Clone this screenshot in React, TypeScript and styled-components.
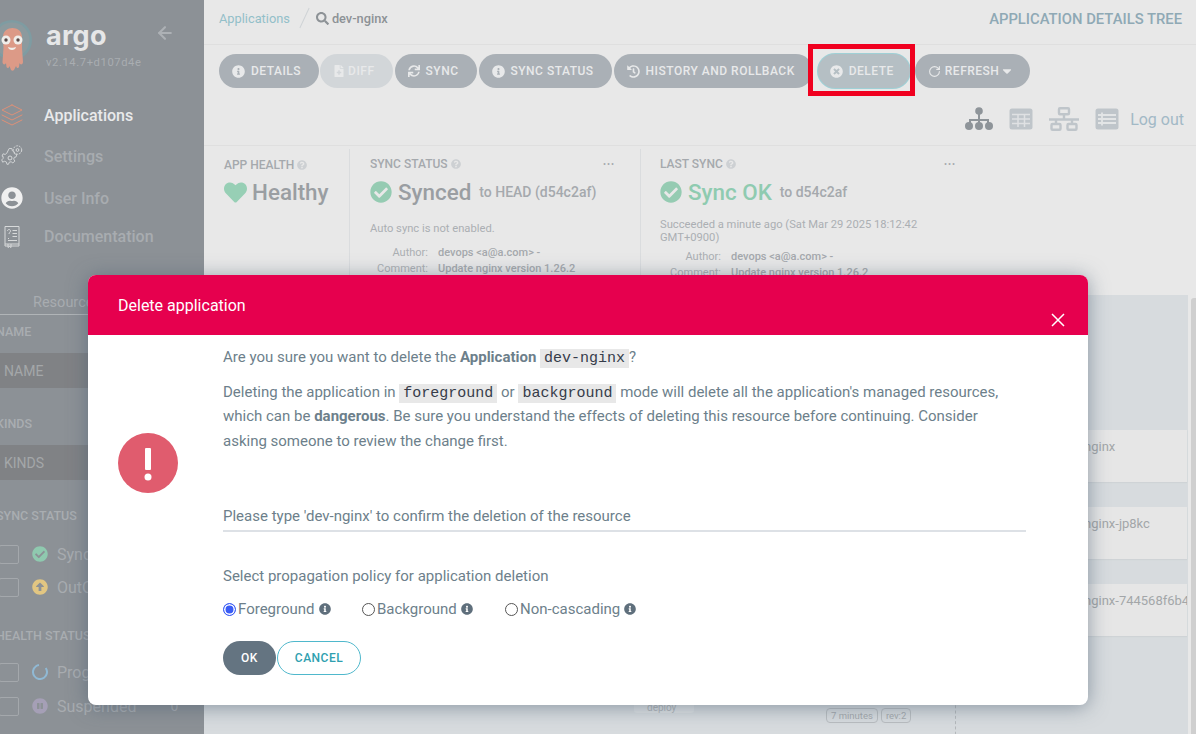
import React from 'react';
import styled, { createGlobalStyle } from 'styled-components';
import {
  FaArrowAltCircleUp,
  FaCaretDown,
  FaCheckCircle,
  FaFileMedical,
  FaHeart,
  FaHistory,
  FaInfoCircle,
  FaPauseCircle,
  FaQuestionCircle,
  FaSearch,
  FaSync,
  FaTimesCircle,
  FaUserCircle,
} from 'react-icons/fa';
import { FiArrowLeft, FiLayers } from 'react-icons/fi';
import { RotateCw } from 'lucide-react';

const GlobalStyle = createGlobalStyle`
  html, body {
    margin: 0;
    height: 100%;
    overflow: hidden;
    font-family: Roboto, "Liberation Sans", sans-serif;
  }
  * {
    box-sizing: border-box;
  }
`;

const Logo = () => (
  <LogoImage viewBox="0 0 40 52">
    <circle cx="20" cy="20" r="20" fill="#7e9ca2" />
    <circle cx="20" cy="20" r="17.500" fill="#8c9a9e" />
    <path d="M11 17c0-12 19-12 19 0v11l1 14c0 3-3 3-3.500 1l-.5 4c-1 2-2.500 1-3-1l-2 4c-1 1-2 1-3 0l-1.500-4c-.5 2-2 3-3 1l-.5-4c-.5 2-3.500 2-3.500-1l1-14z" fill="#dc9a87" />
    <circle cx="14" cy="20" r="4.500" fill="#f0eeea" />
    <circle cx="26" cy="20" r="4.500" fill="#f0eeea" />
    <circle cx="14" cy="20" r="1.700" fill="#5a4a48" />
    <circle cx="26" cy="20" r="1.700" fill="#5a4a48" />
    <path d="M16 27c2 1 6 1 8 0-.5 4-7.500 4-8 0z" fill="#f0eeea" />
  </LogoImage>
);

const SettingsIcon = () => (
  <NavSvg viewBox="0 0 24 24" fill="none" stroke="#d7d9da" strokeWidth="1">
    <circle cx="10" cy="14" r="2" />
    <circle cx="17.500" cy="6" r="1.400" />
    <path d="M8 5h3l.5 2.500 2 1 .2 2.200 2.800 1-1 2.800-1.800.3-.7 2 1.300 2.200-2.200 2-2-1.300-2 .5-.9 2.300H5.500l-.6-2.400-2-.9-2.200 1-1-2.500 1.600-1.800v-2L0 13.500l1.200-2.600 2.300.7 1.700-1.200z" transform="translate(2 0) scale(.9)" />
    <circle cx="17.500" cy="6" r="4.200" strokeDasharray="2 1" />
  </NavSvg>
);

const DocsIcon = () => (
  <NavSvg viewBox="0 0 24 24" fill="none" stroke="#d7d9da" strokeWidth="1">
    <path d="M5 20V2.500h14V20z" />
    <path d="M5 20v2h14v-2M8 20v3.500l1.500-1 1.500 1V20" />
    <path d="M12.500 6.500H17M12.500 9.500H17M12.500 12.500H17M8 14.500h1M8 16.500h9" />
    <path d="M7.500 7c0-2 3-2 3 0 0 1.300-1.500 1.300-1.500 3" />
  </NavSvg>
);

const ProgressRing = () => (
  <svg viewBox="0 0 16 16" width="16" height="16" fill="none">
    <circle cx="8" cy="8" r="7" stroke="#90b9d4" strokeWidth="2" strokeDasharray="36 8" transform="rotate(-35 8 8)" />
  </svg>
);

const TreeViewIcon = () => (
  <ViewSvg viewBox="0 0 28 24" fill="#8e9499" width="28" height="24">
    <circle cx="14" cy="4" r="3.800" />
    <path d="M13 7h2v5h9v4h-2v-2h-7v2h-2v-2H6v2H4v-4h9z" />
    <circle cx="4" cy="19" r="4" />
    <circle cx="14" cy="19" r="4" />
    <circle cx="24" cy="19" r="4" />
  </ViewSvg>
);

const GridViewIcon = () => (
  <ViewSvg viewBox="0 0 24 22" width="24" height="22">
    <rect x="0.500" y="0.500" width="23" height="21" rx="2.500" fill="#bfc5ca" />
    <path d="M9 6v13M15.500 6v13M3 6.500h18M3 11h18M3 15.500h18" stroke="#dfe1e3" strokeWidth="1.500" />
  </ViewSvg>
);

const NetworkViewIcon = () => (
  <ViewSvg viewBox="0 0 30 24" width="30" height="24" fill="none" stroke="#bfc5ca" strokeWidth="2.400">
    <rect x="10" y="1.200" width="10" height="6" rx="1" />
    <path d="M15 7v5M0 12.500h30M7 13v4M23 13v4" />
    <rect x="2.500" y="17" width="9" height="5.800" rx="1" />
    <rect x="18.500" y="17" width="9" height="5.800" rx="1" />
  </ViewSvg>
);

const ListViewIcon = () => (
  <ViewSvg viewBox="0 0 24 22" width="24" height="22">
    <rect x="0.500" y="0.500" width="23" height="21" rx="2.500" fill="#bfc5ca" />
    <path d="M7 4.500v13M3 7h18M3 11h18M3 15h18" stroke="#e3e5e6" strokeWidth="1.800" />
  </ViewSvg>
);

const App = (): JSX.Element => {
  return (
    <Page>
      <GlobalStyle />
      <Sidebar>
        <Brand>
          <Logo />
          <BrandText>
            <BrandName>argo</BrandName>
            <Version>v2.14.7+d107d4e</Version>
          </BrandText>
          <CollapseArrow>
            <FiArrowLeft size={20} strokeWidth={2.5} />
          </CollapseArrow>
        </Brand>
        <Nav>
          <NavItem $active $height={40}>
            <NavIcon><FiLayers size={24} color="#dd9078" strokeWidth={1} /></NavIcon>
            Applications
          </NavItem>
          <NavItem $height={42}>
            <NavIcon><SettingsIcon /></NavIcon>
            Settings
          </NavItem>
          <NavItem $height={42}>
            <NavIcon><FaUserCircle size={22} color="#f0f0f0" /></NavIcon>
            User Info
          </NavItem>
          <NavItem $height={34}>
            <NavIcon><DocsIcon /></NavIcon>
            Documentation
          </NavItem>
        </Nav>
        <FilterTab>Resources</FilterTab>
        <FilterLabel $top={10}>NAME</FilterLabel>
        <FilterInput>NAME</FilterInput>
        <FilterLabel $top={29}>KINDS</FilterLabel>
        <FilterInput>KINDS</FilterInput>
        <FilterLabel $top={29}>SYNC STATUS</FilterLabel>
        <FilterRow $top={22}>
          <Check />
          <FaCheckCircle size={16} color="#8fc9af" />
          <FilterText>Synced</FilterText>
        </FilterRow>
        <FilterRow $top={15}>
          <Check />
          <FaArrowAltCircleUp size={16} color="#e2c682" />
          <FilterText>OutOfSync</FilterText>
        </FilterRow>
        <FilterLabel $top={33}>HEALTH STATUS</FilterLabel>
        <FilterRow $top={20}>
          <Check />
          <ProgressRing />
          <FilterText>Progressing</FilterText>
        </FilterRow>
        <FilterRow $top={16}>
          <Check />
          <FaPauseCircle size={16} color="#a59fb6" />
          <FilterText>Suspended</FilterText>
          <FilterCount>0</FilterCount>
        </FilterRow>
      </Sidebar>

      <Main>
        <TopBar>
          <Crumbs>
            <CrumbLink>Applications</CrumbLink>
            <CrumbSlash />
            <FaSearch size={13} color="#8d9296" />
            <CrumbCurrent>dev-nginx</CrumbCurrent>
          </Crumbs>
          <PageTitle>APPLICATION DETAILS TREE</PageTitle>
        </TopBar>

        <Toolbar>
          <ActionRow>
            <ActionButton>
              <FaInfoCircle size={13} />
              DETAILS
            </ActionButton>
            <ActionButton $disabled>
              <DiffIcon size={12} />
              DIFF
            </ActionButton>
            <ActionButton>
              <FaSync size={12} />
              SYNC
            </ActionButton>
            <ActionButton>
              <FaInfoCircle size={13} />
              SYNC STATUS
            </ActionButton>
            <ActionButton>
              <FaHistory size={13} />
              HISTORY AND ROLLBACK
            </ActionButton>
            <DeleteWrap>
              <DeleteButton>
                <FaTimesCircle size={13} />
                DELETE
              </DeleteButton>
              <DeleteFrame />
            </DeleteWrap>
            <ActionButton>
              <RefreshIcon size={13} strokeWidth={2} />
              REFRESH
              <CaretIcon size={14} />
            </ActionButton>
          </ActionRow>
          <ViewRow>
            <TreeViewIcon />
            <GridViewIcon />
            <NetworkViewIcon />
            <ListViewIcon />
            <LogOut>Log out</LogOut>
          </ViewRow>
        </Toolbar>

        <StatusBar>
          <HealthPanel>
            <PanelTitle>
              APP HEALTH
              <HelpIcon />
            </PanelTitle>
            <StatusLine $top={6}>
              <HeartIcon size={23} />
              <StatusWord>Healthy</StatusWord>
            </StatusLine>
          </HealthPanel>

          <SyncPanel>
            <PanelHead>
              <PanelTitle>
                SYNC STATUS
                <HelpIcon />
              </PanelTitle>
              <Dots>•••</Dots>
            </PanelHead>
            <StatusLine $top={7}>
              <FaCheckCircle size={22} color="#95cbb2" />
              <StatusWord>Synced</StatusWord>
              <StatusSuffix>to HEAD (d54c2af)</StatusSuffix>
            </StatusLine>
            <StatusNote $top={16}>Auto sync is not enabled.</StatusNote>
            <MetaRow $top={11}>
              <MetaKey $width={58}>Author:</MetaKey>
              <MetaValue>devops &lt;a@a.com&gt; -</MetaValue>
            </MetaRow>
            <MetaRow $top={3}>
              <MetaKey $width={58}>Comment:</MetaKey>
              <MetaValue>Update nginx version 1.26.2</MetaValue>
            </MetaRow>
          </SyncPanel>

          <LastSyncPanel>
            <PanelHead>
              <PanelTitle>
                LAST SYNC
                <HelpIcon />
              </PanelTitle>
              <Dots>•••</Dots>
            </PanelHead>
            <StatusLine $top={7}>
              <FaCheckCircle size={22} color="#95cbb2" />
              <StatusWord $ok>Sync OK</StatusWord>
              <StatusSuffix>to d54c2af</StatusSuffix>
            </StatusLine>
            <StatusNote $top={12}>
              Succeeded a minute ago (Sat Mar 29 2025 18:12:42 GMT+0900)
            </StatusNote>
            <MetaRow $top={6}>
              <MetaKey $width={61}>Author:</MetaKey>
              <MetaValue>devops &lt;a@a.com&gt; -</MetaValue>
            </MetaRow>
            <MetaRow $top={3}>
              <MetaKey $width={61}>Comment:</MetaKey>
              <MetaValue>Update nginx version 1.26.2</MetaValue>
            </MetaRow>
          </LastSyncPanel>
        </StatusBar>

        <TreeArea>
          <TreeCanvas>
            <DeployNode>
              <NodeTag>deploy</NodeTag>
            </DeployNode>
            <NodePills>
              <NodePill>7 minutes</NodePill>
              <NodePill>rev:2</NodePill>
            </NodePills>
            <DashedEdge />
            <TreeColumn>
              <TreeCard>dev-nginx</TreeCard>
              <TreeCard>dev-nginx-jp8kc</TreeCard>
              <TreeCard>dev-nginx-744568f6b4</TreeCard>
            </TreeColumn>
          </TreeCanvas>
          <Scrollbar />
        </TreeArea>
      </Main>

      <Modal>
        <ModalHeader>
          <ModalTitle>Delete application</ModalTitle>
          <CloseIcon viewBox="0 0 14 14">
            <path d="M1 1l12 12M13 1L1 13" stroke="#fff" strokeWidth="1.500" fill="none" />
          </CloseIcon>
        </ModalHeader>
        <ModalBody>
          <WarnColumn>
            <svg viewBox="0 0 60 60" width="60" height="60">
              <circle cx="30" cy="30" r="30" fill="#e05c6e" />
              <rect x="27" y="15" width="6" height="22" rx="1" fill="#fff" />
              <circle cx="30" cy="44" r="3.500" fill="#fff" />
            </svg>
          </WarnColumn>
          <ModalContent>
            <Paragraph>
              Are you sure you want to delete the <b>Application</b> <Code>dev-nginx</Code>?
            </Paragraph>
            <Paragraph $top={10}>
              Deleting the application in <Code>foreground</Code> or <Code>background</Code> mode
              will delete all the application&apos;s managed resources, which can be{' '}
              <b>dangerous</b>. Be sure you understand the effects of deleting this resource
              before continuing. Consider asking someone to review the change first.
            </Paragraph>
            <ConfirmField>Please type &apos;dev-nginx&apos; to confirm the deletion of the resource</ConfirmField>
            <PolicyLabel>Select propagation policy for application deletion</PolicyLabel>
            <PolicyRow>
              <PolicyOption $width={139}>
                <Radio $checked />
                Foreground
                <FaInfoCircle size={12} color="#5f6f7c" />
              </PolicyOption>
              <PolicyOption $width={143}>
                <Radio />
                Background
                <FaInfoCircle size={12} color="#5f6f7c" />
              </PolicyOption>
              <PolicyOption $width={140}>
                <Radio />
                Non-cascading
                <FaInfoCircle size={12} color="#5f6f7c" />
              </PolicyOption>
            </PolicyRow>
            <ButtonRow>
              <OkButton>OK</OkButton>
              <CancelButton>CANCEL</CancelButton>
            </ButtonRow>
          </ModalContent>
        </ModalBody>
      </Modal>
    </Page>
  );
};

export default App;

const Page = styled.div`
  display: flex;
  height: 100vh;
  overflow: hidden;
  position: relative;
  background: #e8e8e8;
`;

const Sidebar = styled.aside`
  background: #8c9196;
  display: flex;
  flex-direction: column;
  flex-shrink: 0;
  overflow: hidden;
  width: 204px;
`;

const Brand = styled.div`
  align-items: flex-start;
  display: flex;
  height: 90px;
  padding-top: 20px;
`;

const LogoImage = styled.svg`
  flex-shrink: 0;
  height: 52px;
  margin-left: -8px;
  width: 40px;
`;

const BrandText = styled.div`
  margin-left: 14px;
  width: 109px;
`;

const BrandName = styled.div`
  color: #e6e7e8;
  font-family: Inter, sans-serif;
  font-size: 27px;
  font-weight: 700;
  letter-spacing: 0.3px;
  line-height: 32px;
`;

const Version = styled.div`
  color: #a9adb1;
  font-size: 11.2px;
  letter-spacing: 0.6px;
  line-height: 14px;
  margin-top: 4px;
`;

const CollapseArrow = styled.div`
  color: #adb1b5;
  display: flex;
  margin-top: 3px;
`;

const Nav = styled.nav`
  display: flex;
  flex-direction: column;
  margin-top: 5px;
`;

const NavItem = styled.div<{ $active?: boolean; $height: number }>`
  align-items: center;
  color: ${(p) => (p.$active ? '#e9eaeb' : '#a8acb0')};
  display: flex;
  font-size: 16px;
  font-weight: 500;
  height: ${(p) => p.$height}px;
`;

const NavIcon = styled.span`
  display: flex;
  justify-content: center;
  margin-right: 20px;
  width: 24px;
`;

const NavSvg = styled.svg`
  height: 24px;
  width: 24px;
`;

const FilterTab = styled.div`
  border-bottom: 1px solid #b0b4b7;
  color: #a8acb0;
  flex-shrink: 0;
  font-size: 14.5px;
  height: 21px;
  margin-top: 41px;
  padding-left: 33px;
  width: 100px;
`;

const FilterLabel = styled.div<{ $top: number }>`
  color: #a9adb1;
  flex-shrink: 0;
  font-size: 12.5px;
  font-weight: 500;
  line-height: 14px;
  margin-left: -4px;
  margin-top: ${(p) => p.$top}px;
  white-space: nowrap;
`;

const FilterInput = styled.div`
  align-items: center;
  background: #808285;
  color: #a4a7a9;
  display: flex;
  flex-shrink: 0;
  font-size: 14px;
  height: 35px;
  margin-top: 14px;
  padding-left: 4px;
`;

const FilterRow = styled.div<{ $top: number }>`
  align-items: center;
  display: flex;
  flex-shrink: 0;
  height: 18px;
  margin-top: ${(p) => p.$top}px;
`;

const Check = styled.span`
  border: 1px solid #a4a8ac;
  border-radius: 2px;
  height: 19px;
  margin-left: -1px;
  margin-right: 13px;
  width: 20px;
`;

const FilterText = styled.span`
  color: #a8acb0;
  font-size: 16px;
  margin-left: 9px;
`;

const FilterCount = styled.span`
  color: #a8acb0;
  font-size: 14px;
  margin-left: 34px;
`;

const Main = styled.main`
  display: flex;
  flex: 1;
  flex-direction: column;
  min-width: 0;
`;

const TopBar = styled.header`
  align-items: center;
  border-bottom: 1px solid #dfdfdf;
  display: flex;
  flex-shrink: 0;
  height: 45px;
  justify-content: space-between;
  padding: 0 14px 8px 15px;
`;

const Crumbs = styled.div`
  align-items: center;
  display: flex;
`;

const CrumbLink = styled.span`
  color: #93bfc9;
  font-size: 12.8px;
`;

const CrumbSlash = styled.span`
  background: #cfd3d6;
  height: 22px;
  margin: 0 11px 0 14px;
  transform: rotate(25deg);
  width: 1px;
`;

const CrumbCurrent = styled.span`
  color: #8d9296;
  font-size: 12.8px;
  font-weight: 500;
  margin-left: 3px;
`;

const PageTitle = styled.div`
  color: #8fa9b5;
  font-size: 14.8px;
  font-weight: 500;
  margin-top: 2px;
`;

const Toolbar = styled.div`
  border-bottom: 1px solid #dfdfdf;
  flex-shrink: 0;
  height: 101px;
  padding: 9px 15px 0;
`;

const ActionRow = styled.div`
  align-items: center;
  display: flex;
  gap: 2px;

  & > :first-child {
    margin-right: -1px;
  }
`;

const ActionButton = styled.div<{ $disabled?: boolean }>`
  align-items: center;
  background: ${(p) => (p.$disabled ? '#d2d6d9' : '#aab0b6')};
  border-radius: 17px;
  color: #e8e9ea;
  display: flex;
  font-size: 12px;
  font-weight: 500;
  gap: 6px;
  height: 34px;
  letter-spacing: 0.5px;
  padding: 0 18px 0 13px;
  white-space: nowrap;
`;

const DiffIcon = styled(FaFileMedical)`
  margin-right: -3px;
`;

const DeleteWrap = styled.div`
  margin: 0 3px 0 3px;
  position: relative;
`;

const DeleteFrame = styled.div`
  border: 5px solid #f0001f;
  bottom: -8px;
  left: -10px;
  position: absolute;
  right: -5px;
  top: -10px;
  z-index: 1;
`;

const DeleteButton = styled(ActionButton)`
  background: #b5bfc4;
  box-shadow: 0 0 0 1px #9fd0d6;
  padding: 0 16px 0 12px;
`;

const RefreshIcon = styled(RotateCw)`
  margin-right: -2px;
`;

const CaretIcon = styled(FaCaretDown)`
  margin: 0 -2px 0 -5px;
`;

const ViewRow = styled.div`
  align-items: center;
  display: flex;
  gap: 16px;
  justify-content: flex-end;
  margin: 19px -3px 0 0;
`;

const ViewSvg = styled.svg`
  display: block;
  flex-shrink: 0;
`;

const LogOut = styled.span`
  color: #a2b9c6;
  font-size: 16px;
  margin-left: -5px;
`;

const StatusBar = styled.section`
  display: flex;
  flex-shrink: 0;
  height: 149px;
  overflow: hidden;
  padding-top: 3px;
`;

const HealthPanel = styled.div`
  border-right: 1px solid #dadcde;
  padding: 9px 0 0 20px;
  width: 146px;
`;

const SyncPanel = styled.div`
  border-right: 1px solid #dadcde;
  padding: 8px 25px 0 20px;
  width: 291px;
`;

const LastSyncPanel = styled.div`
  padding: 8px 0 0 19px;
  width: 315px;
`;

const PanelHead = styled.div`
  align-items: center;
  display: flex;
  justify-content: space-between;
`;

const PanelTitle = styled.div`
  align-items: center;
  color: #a5a9ad;
  display: flex;
  font-size: 12px;
  font-weight: 500;
  gap: 3px;
`;

const HelpIcon = styled(FaQuestionCircle)`
  color: #cdd0d3;
  height: 10px;
  width: 10px;
`;

const Dots = styled.span`
  color: #a5a9ad;
  font-size: 9px;
  letter-spacing: 1px;
  line-height: 12px;
`;

const StatusLine = styled.div<{ $top: number }>`
  align-items: center;
  display: flex;
  gap: 6px;
  height: 28px;
  margin-top: ${(p) => p.$top}px;
`;

const HeartIcon = styled(FaHeart)`
  color: #97cfb5;
  margin-right: -1px;
`;

const StatusWord = styled.span<{ $ok?: boolean }>`
  color: ${(p) => (p.$ok ? '#8fcbb0' : '#9a9ea2')};
  font-size: 22.4px;
  font-weight: 500;
`;

const StatusSuffix = styled.span`
  color: #a5a9ad;
  font-size: 14px;
  font-weight: 500;
  margin-left: 2px;
`;

const StatusNote = styled.div<{ $top: number }>`
  color: #abafb3;
  font-size: 11.2px;
  line-height: 13px;
  margin-top: ${(p) => p.$top}px;
`;

const MetaRow = styled.div<{ $top: number }>`
  display: flex;
  font-size: 11px;
  gap: 10px;
  line-height: 13px;
  margin-top: ${(p) => p.$top}px;
  white-space: nowrap;
`;

const MetaKey = styled.span<{ $width: number }>`
  color: #abafb3;
  text-align: right;
  width: ${(p) => p.$width}px;
`;

const MetaValue = styled.span`
  color: #a5a9ad;
  font-weight: 500;
`;

const TreeArea = styled.section`
  display: flex;
  flex: 1;
  gap: 3px;
  min-height: 0;
`;

const TreeCanvas = styled.div`
  background: #d7dbde;
  flex: 1;
  overflow: hidden;
  position: relative;
`;

const TreeColumn = styled.div`
  display: flex;
  flex-direction: column;
  gap: 25px;
  margin-left: 756px;
  padding: 135px 1px 0 0;
`;

const TreeCard = styled.div`
  background: #e6e6e6;
  box-shadow: 0 1px 1px #cfd3d6;
  color: #a3a6a9;
  font-size: 13px;
  height: 52px;
  overflow: hidden;
  padding: 9px 0 0 100px;
  white-space: nowrap;
`;

const DeployNode = styled.div`
  background: #dfe2e4;
  border-radius: 3px;
  height: 11px;
  left: 430px;
  position: absolute;
  top: 407px;
  width: 60px;
`;

const NodeTag = styled.span`
  color: #b2b6b9;
  display: block;
  font-size: 10px;
  line-height: 11px;
  padding-left: 13px;
`;

const NodePills = styled.div`
  display: flex;
  gap: 3px;
  left: 622px;
  position: absolute;
  top: 413px;
`;

const NodePill = styled.span`
  border: 1px solid #b9bdc0;
  border-radius: 4px;
  color: #a5a9ad;
  font-size: 9.5px;
  line-height: 13px;
  padding: 0 4px;
`;

const DashedEdge = styled.div`
  border-left: 1px dashed #b4b8bb;
  height: 40px;
  left: 751px;
  position: absolute;
  top: 405px;
`;

const Scrollbar = styled.div`
  background: #cfcfcf;
  border-radius: 3px 0 0 0;
  flex-shrink: 0;
  margin-top: 3px;
  width: 5px;
`;

const Modal = styled.div`
  background: #fff;
  border-radius: 8px;
  box-shadow: 0 2px 20px rgba(70, 90, 110, 0.55);
  display: flex;
  flex-direction: column;
  height: 430px;
  left: 88px;
  overflow: hidden;
  position: absolute;
  top: 275px;
  width: 1000px;
  z-index: 2;
`;

const ModalHeader = styled.div`
  align-items: center;
  background: #e6004e;
  display: flex;
  flex-shrink: 0;
  height: 60px;
  justify-content: space-between;
  padding: 0 23px 0 30px;
`;

const ModalTitle = styled.div`
  color: #fff;
  font-size: 16px;
`;

const CloseIcon = styled.svg`
  align-self: flex-end;
  height: 14px;
  margin-bottom: 8px;
  width: 14px;
`;

const ModalBody = styled.div`
  display: flex;
  flex: 1;
`;

const WarnColumn = styled.div`
  flex-shrink: 0;
  padding: 98px 0 0 30px;
  width: 135px;
`;

const ModalContent = styled.div`
  color: #6d7f8b;
  display: flex;
  flex-direction: column;
  font-size: 15px;
  padding-top: 10px;
  width: 803px;
`;

const Paragraph = styled.p<{ $top?: number }>`
  line-height: 24.5px;
  margin: ${(p) => p.$top ?? 0}px 0 0;
  width: 790px;

  b {
    font-weight: 700;
  }
`;

const Code = styled.code`
  background: #e8e8e8;
  color: #363c4a;
  font-family: "Liberation Mono", monospace;
  font-size: 15px;
  line-height: 1;
  padding: 1px 4px;
`;

const ConfirmField = styled.div`
  border-bottom: 2px solid #dde1e6;
  flex-shrink: 0;
  height: 28px;
  line-height: 24px;
  margin-top: 51px;
`;

const PolicyLabel = styled.div`
  line-height: 20px;
  margin-top: 34px;
`;

const PolicyRow = styled.div`
  align-items: center;
  display: flex;
  height: 20px;
  margin-top: 13px;
`;

const PolicyOption = styled.div<{ $width: number }>`
  align-items: center;
  display: flex;
  width: ${(p) => p.$width}px;

  svg {
    margin-left: 4px;
  }
`;

const Radio = styled.span<{ $checked?: boolean }>`
  background: ${(p) => (p.$checked ? '#3a5cf5' : '#fff')};
  border: 1px solid ${(p) => (p.$checked ? '#3a5cf5' : '#555')};
  border-radius: 50%;
  box-shadow: ${(p) => (p.$checked ? 'inset 0 0 0 1.500px #fff' : 'none')};
  flex-shrink: 0;
  height: 13px;
  margin-right: 2px;
  width: 13px;
`;

const ButtonRow = styled.div`
  display: flex;
  gap: 1px;
  margin-top: 22px;
`;

const OkButton = styled.div`
  align-items: center;
  background: #647481;
  border-radius: 17px;
  color: #fff;
  display: flex;
  font-size: 12px;
  font-weight: 500;
  height: 34px;
  justify-content: center;
  letter-spacing: 0.5px;
  width: 53px;
`;

const CancelButton = styled.div`
  align-items: center;
  background: #fff;
  border: 1px solid #4fb8cc;
  border-radius: 17px;
  color: #2f9fb0;
  display: flex;
  font-size: 12px;
  font-weight: 500;
  height: 34px;
  justify-content: center;
  letter-spacing: 0.5px;
  width: 84px;
`;
